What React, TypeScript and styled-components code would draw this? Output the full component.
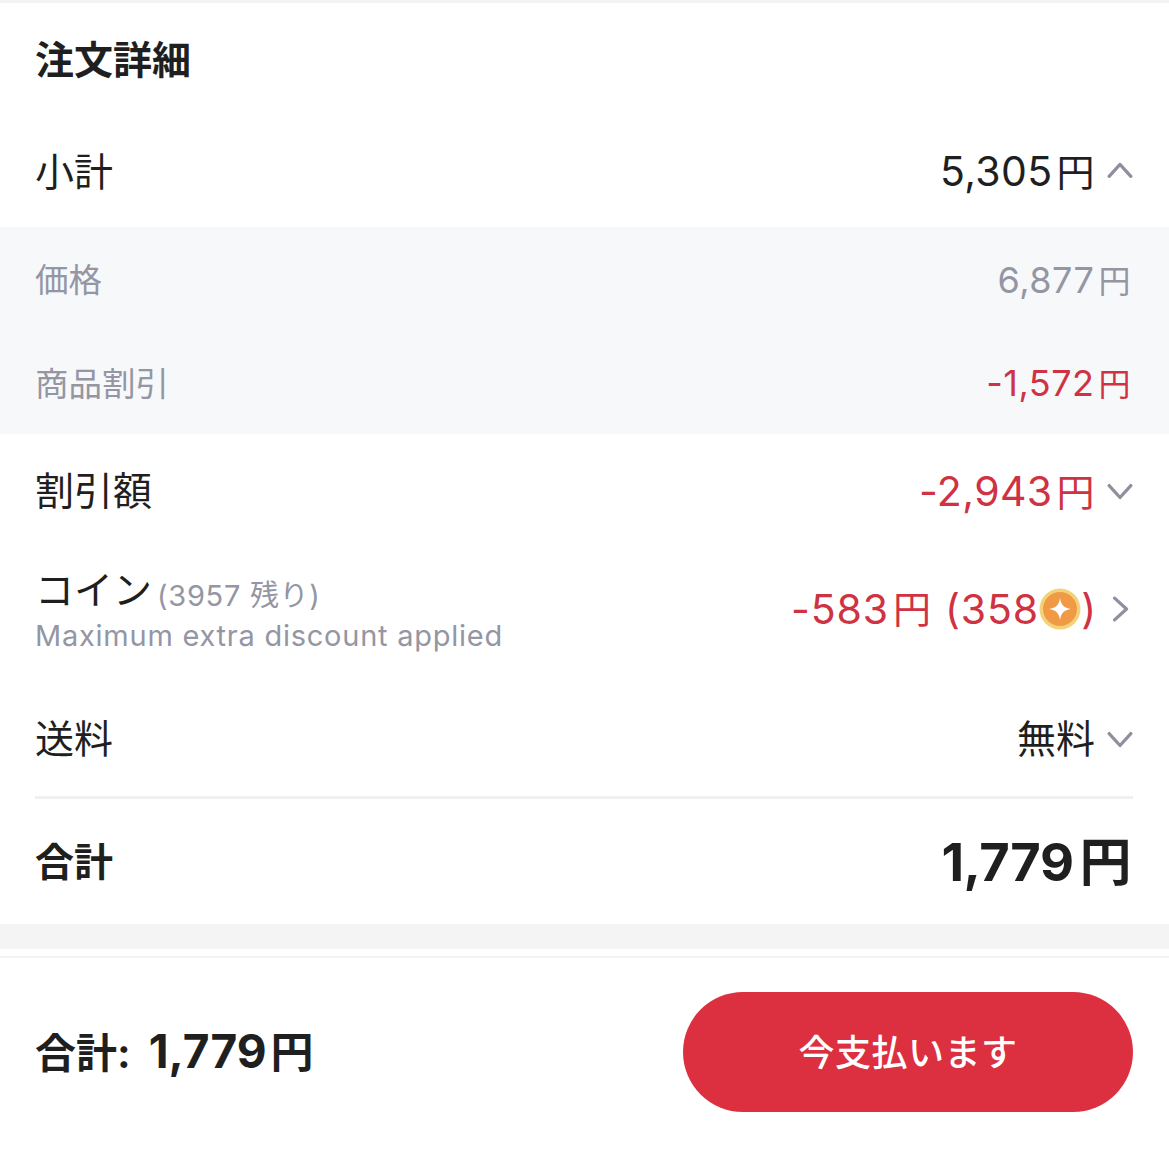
import { createGlobalStyle, styled } from "styled-components";

const GlobalStyle = createGlobalStyle`
  html, body {
    margin: 0;
    padding: 0;
    background: #fff;
  }
  body {
    font-family: "Inter", "Noto Sans CJK JP", sans-serif;
    color: #1f1f1f;
  }
  * {
    box-sizing: border-box;
  }
`;

const Page = styled.div`
  width: 1169px;
  height: 1166px;
  display: flex;
  flex-direction: column;
  background: #fff;
  overflow: hidden;
  border-top: 3px solid #f3f3f4;
`;

const Title = styled.h2`
  margin: 0;
  height: 117px;
  padding: 32px 35px 0;
  font-size: 39px;
  line-height: 50px;
  font-weight: 700;
  color: #1f1f1f;
`;

const Row = styled.div<{ $height: number; $lift?: number }>`
  height: ${(p) => p.$height}px;
  display: flex;
  align-items: center;
  justify-content: space-between;
  padding: 0 36px ${(p) => p.$lift ?? 0}px 35px;
`;

const Label = styled.span`
  font-size: 39px;
  line-height: 48px;
  font-weight: 400;
`;

const Value = styled.span<{ $red?: boolean }>`
  font-size: 41px;
  line-height: 48px;
  letter-spacing: 0.4px;
  color: ${(p) => (p.$red ? "#cf3242" : "#1f1f1f")};
`;

const Yen = styled.span`
  font-size: 38px;
  margin-left: 4px;
`;

const Right = styled.div`
  display: flex;
  align-items: center;
  gap: 12px;
`;

const Details = styled.div`
  height: 207px;
  background: #f7f8fa;
  display: flex;
  flex-direction: column;
`;

const DetailRow = styled.div`
  height: 104px;
  display: flex;
  align-items: center;
  justify-content: space-between;
  padding: 0 38px 0 35px;
`;

const DetailLabel = styled.span`
  margin-bottom: 2px;
  font-size: 33.5px;
  color: #9496a3;
`;

const DetailValue = styled.span<{ $red?: boolean }>`
  font-size: 36px;
  letter-spacing: 0.5px;
  color: ${(p) => (p.$red ? "#cf3242" : "#9496a3")};
`;

const DetailYen = styled.span`
  font-size: 32px;
  margin-left: 4px;
`;

const CoinInfo = styled.div`
  display: flex;
  flex-direction: column;
`;

const CoinTitle = styled.div`
  display: flex;
  align-items: flex-start;
  gap: 5px;
  height: 50px;
`;

const CoinBalance = styled.span`
  margin-top: 6px;
  font-size: 29px;
  line-height: 48px;
  letter-spacing: 0.7px;
  color: #9496a3;
`;

const CoinNote = styled.span`
  font-size: 29px;
  line-height: 40px;
  letter-spacing: 0.75px;
  color: #9496a3;
`;

const CoinRight = styled(Right)`
  margin-bottom: 3px;
  gap: 10px;
`;

const CoinValue = styled(Value)`
  display: flex;
  align-items: center;
  letter-spacing: 0.9px;
`;

const CoinYen = styled(Yen)`
  margin-left: 4px;
`;

const Paren = styled.span`
  margin-left: 13px;
`;

const Divider = styled.div`
  height: 3px;
  margin: 0 36px 0 35px;
  background: #f0f0f1;
`;

const TotalLabel = styled.span`
  font-size: 39px;
  line-height: 48px;
  font-weight: 700;
`;

const TotalValue = styled.span`
  margin: 0 2px 6px 0;
  font-size: 52.5px;
  font-weight: 700;
  letter-spacing: -0.5px;
`;

const TotalYen = styled.span`
  font-size: 52px;
  font-weight: 700;
  margin-left: 6px;
`;

const Spacer = styled.div`
  height: 25px;
  background: #f4f4f4;
`;

const Footer = styled.div`
  margin-top: 7px;
  flex: 1;
  border-top: 2px solid #f3f3f4;
  display: flex;
  align-items: flex-start;
  justify-content: space-between;
  padding: 34px 36px 0 35px;
`;

const FooterTotal = styled.span`
  margin-top: 30px;
  font-size: 41px;
  line-height: 58px;
  font-weight: 700;
  color: #1f1f1f;
`;

const FooterAmount = styled.span`
  margin-left: 18px;
  font-size: 46px;
`;

const FooterYen = styled.span`
  font-size: 43px;
  margin-left: 4px;
`;

const PayButton = styled.button`
  width: 450px;
  height: 120px;
  padding: 0 0 5px;
  border: 0;
  border-radius: 60px;
  background: #dc3040;
  color: #fff;
  font-family: inherit;
  font-size: 36px;
  font-weight: 500;
  letter-spacing: 0.5px;
`;

const Chevron = ({ dir }: { dir: "up" | "down" | "right" }) => {
  const d = {
    up: "M2 16 L12 5 L22 16",
    down: "M2 7 L12 18 L22 7",
    right: "M7 2 L18 12 L7 22",
  }[dir];
  return (
    <svg width="26" height="26" viewBox="0 0 24 24" fill="none">
      <path d={d} stroke="#8e909d" strokeWidth="3" strokeLinecap="round" strokeLinejoin="round" />
    </svg>
  );
};

const Coin = () => (
  <svg width="42" height="42" viewBox="0 0 42 42">
    <circle cx="21" cy="21" r="20.5" fill="#f4d27a" />
    <circle cx="21" cy="21" r="17" fill="#f09a45" />
    <path d="M21 10 C22 17 25 20 32 21 C25 22 22 25 21 32 C20 25 17 22 10 21 C17 20 20 17 21 10 Z" fill="#fff" />
  </svg>
);

export default function App() {
  return (
    <Page>
      <GlobalStyle />
      <Title>注文詳細</Title>
      <Row $height={107} $lift={4}>
        <Label>小計</Label>
        <Right>
          <Value>
            5,305<Yen>円</Yen>
          </Value>
          <Chevron dir="up" />
        </Right>
      </Row>
      <Details>
        <DetailRow>
          <DetailLabel>価格</DetailLabel>
          <DetailValue>
            6,877<DetailYen>円</DetailYen>
          </DetailValue>
        </DetailRow>
        <DetailRow>
          <DetailLabel>商品割引</DetailLabel>
          <DetailValue $red>
            -1,572<DetailYen>円</DetailYen>
          </DetailValue>
        </DetailRow>
      </Details>
      <Row $height={114}>
        <Label>割引額</Label>
        <Right>
          <Value $red>
            -2,943<Yen>円</Yen>
          </Value>
          <Chevron dir="down" />
        </Right>
      </Row>
      <Row $height={133} $lift={8}>
        <CoinInfo>
          <CoinTitle>
            <Label>コイン</Label>
            <CoinBalance>(3957 残り)</CoinBalance>
          </CoinTitle>
          <CoinNote>Maximum extra discount applied</CoinNote>
        </CoinInfo>
        <CoinRight>
          <CoinValue $red>
            -583<CoinYen>円</CoinYen>
            <Paren>(358</Paren>
            <Coin />)
          </CoinValue>
          <Chevron dir="right" />
        </CoinRight>
      </Row>
      <Row $height={115}>
        <Label>送料</Label>
        <Right>
          <Label>無料</Label>
          <Chevron dir="down" />
        </Right>
      </Row>
      <Divider />
      <Row $height={125}>
        <TotalLabel>合計</TotalLabel>
        <TotalValue>
          1,779<TotalYen>円</TotalYen>
        </TotalValue>
      </Row>
      <Spacer />
      <Footer>
        <FooterTotal>
          合計:
          <FooterAmount>
            1,779<FooterYen>円</FooterYen>
          </FooterAmount>
        </FooterTotal>
        <PayButton>今支払います</PayButton>
      </Footer>
    </Page>
  );
}
